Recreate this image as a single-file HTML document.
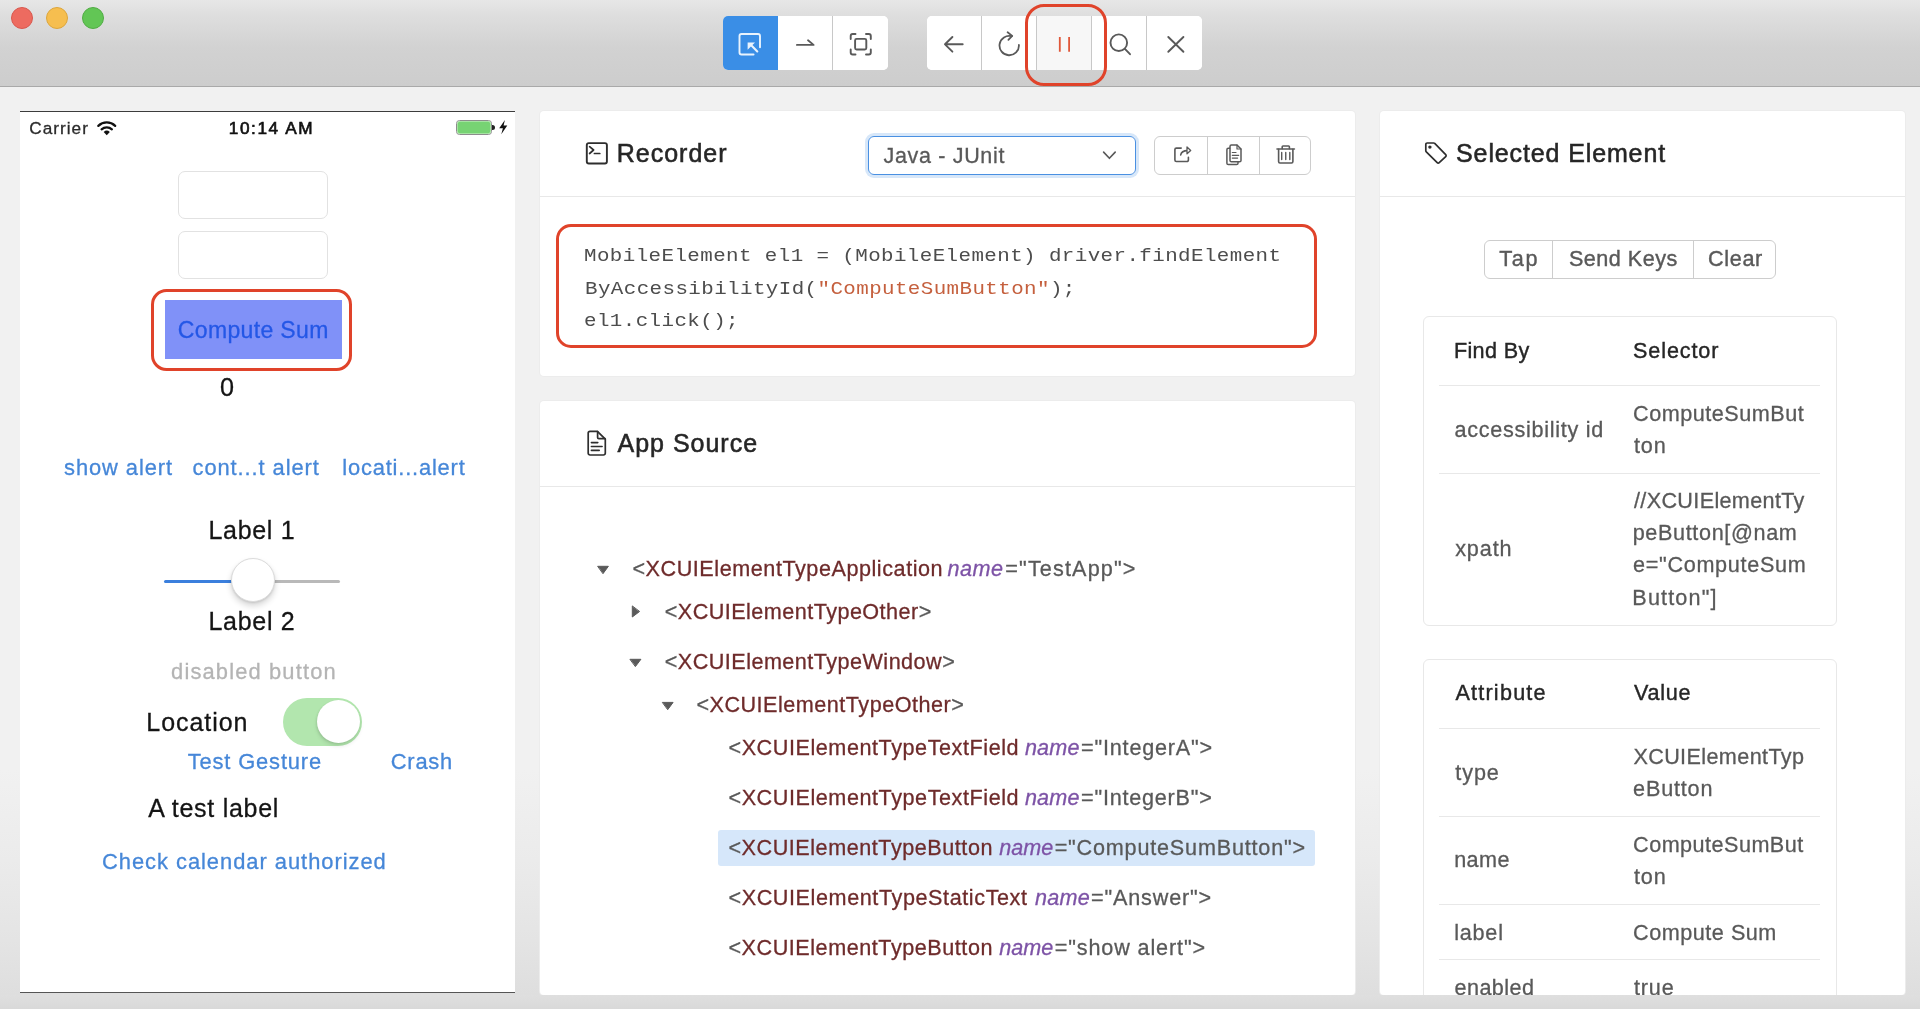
<!DOCTYPE html>
<html>
<head>
<meta charset="utf-8">
<title>Appium</title>
<style>
*{box-sizing:border-box;margin:0;padding:0}
html,body{width:1920px;height:1009px;overflow:hidden}
body{background:linear-gradient(to bottom,#f1f1f1 0,#f1f1f1 770px,#ebebeb 860px,#e4e4e4 940px,#dedede 995px,#dadada 1009px);font-family:"Liberation Sans",sans-serif;color:#262626;position:relative}
.abs{position:absolute}
svg{position:absolute;overflow:visible}
.t{position:absolute;white-space:pre;line-height:normal;font-family:"Liberation Sans",sans-serif}
#titlebar{position:absolute;left:0;top:0;width:1920px;height:87px;background:linear-gradient(#e7e7e7 0,#dedede 18%,#d2d2d2 55%,#cdcdcd 100%);border-bottom:1px solid #a9a9a9}
.tl{position:absolute;top:7px;width:22px;height:22px;border-radius:50%}
.bgroup{position:absolute;top:16px;height:54px;display:flex;border-radius:5px;background:#fff;overflow:hidden}
.bgroup .b{width:55px;height:54px;border-right:1px solid #c8c8c8;position:relative;background:#fff}
.bgroup .b:last-child{border-right:none}
.card{position:absolute;background:#fff;border-radius:4px;overflow:hidden;box-shadow:0 0 0 1px #ececec}
.hline{position:absolute;height:1px;background:#e8e8e8}
.sbtn{position:absolute;display:flex;border:1px solid #cdcdcd;border-radius:6px;background:#fff}
.sbtn div{border-right:1px solid #cdcdcd;height:100%}
.sbtn div:last-child{border-right:none}
.tbl{position:absolute;border:1px solid #e8e8e8;border-radius:6px;background:#fff}
#bottomshade{position:absolute;left:0;top:995px;width:1920px;height:14px;background:linear-gradient(#dfdfdf,#d9d9d9)}
body.measure{background:#fff}
body.measure *{visibility:hidden}
body.measure .t,body.measure .t *{visibility:visible;color:#000 !important;-webkit-text-stroke-color:#000 !important}
</style>
</head>
<body>
<div id="titlebar">
  <div class="tl" style="left:10.5px;background:#ed6b60;border:1px solid #d9584e"></div>
  <div class="tl" style="left:46.3px;background:#f6be4f;border:1px solid #dda63c"></div>
  <div class="tl" style="left:82px;background:#62c655;border:1px solid #51ad44"></div>
  <div class="bgroup" id="g1" style="left:723px;width:165px">
    <div class="b" style="background:#3a8ee6;border-right-color:#3a8ee6"></div>
    <div class="b"></div>
    <div class="b"></div>
  </div>
  <div class="bgroup" id="g2" style="left:927px;width:275px">
    <div class="b"></div>
    <div class="b"></div>
    <div class="b" style="background:#f7f7f7"></div>
    <div class="b"></div>
    <div class="b"></div>
  </div>
  <svg style="left:0;top:0" width="1920" height="87" viewBox="0 0 1920 87" fill="none" stroke-linecap="round" stroke-linejoin="round">
  <!-- select element (white on blue) -->
  <g stroke="#e9f3fd" stroke-width="1.9">
    <path d="M753.6 54.5 H741.5 a2 2 0 0 1 -2 -2 V36 a2 2 0 0 1 2 -2 H758 a2 2 0 0 1 2 2 V47.2"/>
    <path d="M757.3 51.4 L750 44.1" stroke-width="2.1"/>
  </g>
  <path d="M747.6 42.4 H755 L747.6 49.8 Z" fill="#e9f3fd" stroke="none"/>
  <!-- swap right -->
  <g stroke="#595959" stroke-width="1.8">
    <path d="M796.9 44.9 H813.6 L808 40.3"/>
  </g>
  <!-- scan -->
  <g stroke="#595959" stroke-width="1.9">
    <path d="M850.7 39 V36 a2 2 0 0 1 2 -2 H855.5"/>
    <path d="M866 34 H868.8 a2 2 0 0 1 2 2 V39"/>
    <path d="M870.8 49.5 V52.5 a2 2 0 0 1 -2 2 H866"/>
    <path d="M855.5 54.5 H852.7 a2 2 0 0 1 -2 -2 V49.5"/>
    <rect x="855.1" y="38.9" width="11.2" height="10.6" rx="1.5"/>
  </g>
  <!-- arrow left -->
  <g stroke="#595959" stroke-width="1.9">
    <path d="M962.7 44.3 H945 M952.4 37 L945 44.3 L952.4 51.7"/>
  </g>
  <!-- reload -->
  <g stroke="#595959" stroke-width="1.8">
    <path d="M1018.9 45 A9.7 9.7 0 1 1 1011.8 36.2"/>
    <path d="M1007.6 32.3 L1012.2 35.9 L1008.4 39.8"/>
  </g>
  <!-- pause -->
  <g stroke="#e0583a" stroke-width="1.8" stroke-linecap="butt">
    <path d="M1059.8 36.9 V51.8 M1069.1 36.9 V51.8"/>
  </g>
  <!-- search -->
  <g stroke="#595959" stroke-width="1.9">
    <circle cx="1118.8" cy="42.7" r="8.3"/>
    <path d="M1124.9 48.9 L1130 54.2"/>
  </g>
  <!-- close -->
  <g stroke="#595959" stroke-width="1.9">
    <path d="M1168.3 37 L1183.4 51.8 M1183.4 37 L1168.3 51.8"/>
  </g>
</svg>

  <div class="abs" style="left:1025.4px;top:4.3px;width:81.7px;height:82px;border:3.7px solid #e0432a;border-radius:19px"></div>
</div>

<!-- phone -->
<div id="phone" class="abs" style="left:20px;top:111px;width:495px;height:882px;background:#fff;border-top:1px solid #3c3c3c;border-bottom:1px solid #555"></div>
<!-- status bar icons -->
<svg style="left:94px;top:116.7px" width="26" height="22" viewBox="94 116 26 22">
  <g fill="none" stroke="#111" stroke-width="2.25" stroke-linecap="round">
    <path d="M98.3 124.9 A12.2 12.2 0 0 1 115.2 124.9"/>
    <path d="M101.6 128.3 A7.6 7.6 0 0 1 111.9 128.3"/>
  </g>
  <path d="M106.75 134.2 L103.7 131 A4.4 4.4 0 0 1 109.8 131 Z" fill="#111"/>
</svg>
<div class="abs" style="left:456px;top:120px;width:36px;height:15px;border:1px solid #8d8d8d;border-radius:3.5px;background:#fff"></div>
<div class="abs" style="left:457px;top:121px;width:34px;height:13px;border-radius:2.5px;background:#77d373;border:1px solid #a5e3a2"></div>
<div class="abs" style="left:492px;top:125px;width:2.6px;height:5.4px;background:#222;border-radius:0 2.5px 2.5px 0"></div>
<svg style="left:498px;top:119px" width="11" height="16" viewBox="498 119 11 16"><path d="M504.9 119.9 L499.2 128.3 L502.9 128.3 L501.3 134.2 L507.3 125.6 L503.6 125.6 Z" fill="#111"/></svg>
<!-- text fields -->
<div class="abs" style="left:177.7px;top:170.7px;width:150px;height:48.3px;border:1px solid #e2e2e2;border-radius:7px;background:#fff"></div>
<div class="abs" style="left:177.7px;top:231.2px;width:150px;height:48.3px;border:1px solid #e2e2e2;border-radius:7px;background:#fff"></div>
<!-- compute sum -->
<div class="abs" style="left:165px;top:300px;width:177px;height:59px;background:#8091f8"></div>
<div class="abs" style="left:151.2px;top:288.9px;width:201.3px;height:82.2px;border:3.3px solid #e0432a;border-radius:15.5px"></div>
<!-- slider -->
<div class="abs" style="left:164px;top:579.5px;width:90px;height:3px;background:#3b7fdd;border-radius:1.5px"></div>
<div class="abs" style="left:254px;top:579.5px;width:86px;height:3px;background:#b9b9b9;border-radius:1.5px"></div>
<div class="abs" style="left:230.5px;top:557.5px;width:44px;height:44px;border-radius:50%;background:#fff;border:0.5px solid #dcdcdc;box-shadow:0 4px 6px rgba(0,0,0,0.16),0 1px 2px rgba(0,0,0,0.10)"></div>
<!-- switch -->
<div class="abs" style="left:283.1px;top:697.5px;width:78.9px;height:48.2px;border-radius:24.1px;background:#b2e6ae"></div>
<div class="abs" style="left:317px;top:700px;width:43.3px;height:43.3px;border-radius:50%;background:#fff;box-shadow:0 3px 4px rgba(0,0,0,0.10),-1px 1px 2px rgba(0,0,0,0.07)"></div>


<!-- recorder card -->
<div class="card" id="rec" style="left:539.8px;top:110.8px;width:815px;height:265px">
  <div class="hline" style="left:0;top:84.8px;width:815px"></div>
</div>
<!-- select box -->
<div class="abs" style="left:868px;top:136px;width:268px;height:39px;border:1.5px solid #4a90e2;border-radius:6px;box-shadow:0 0 0 3px rgba(74,144,226,0.22)"></div>
<!-- button group -->
<div class="sbtn" style="left:1154.4px;top:136.2px;width:157px;height:38.6px"><div style="width:52.6px"></div><div style="width:52.1px"></div><div style="flex:1"></div></div>
<!-- code box -->
<div class="abs" style="left:555.8px;top:224.4px;width:761px;height:124px;border:3.3px solid #e0432a;border-radius:15px"></div>

<svg style="left:540px;top:111px" width="815" height="265" viewBox="540 111 815 265" fill="none" stroke-linecap="round" stroke-linejoin="round">
  <!-- recorder (code) icon -->
  <g stroke="#2e2e2e" stroke-width="1.9">
    <rect x="586.8" y="143.1" width="20.1" height="20.4" rx="2"/>
    <path d="M589.6 146.7 L593.6 150 L589.6 153.5 M594.4 153.5 H599.8" stroke-width="1.7"/>
  </g>
  <!-- select chevron -->
  <path d="M1103.6 152.1 L1109.4 158.3 L1115.2 152.1" stroke="#595959" stroke-width="1.6"/>
  <!-- export -->
  <g stroke="#595959" stroke-width="1.6">
    <path d="M1181.2 148.1 H1176.4 a1.5 1.5 0 0 0 -1.5 1.5 V160 a1.5 1.5 0 0 0 1.5 1.5 H1186.9 a1.5 1.5 0 0 0 1.5 -1.5 V157.2"/>
    <path d="M1180.7 154.9 C1181.3 151.9 1183.6 150.6 1187.4 150.6"/>
    <path d="M1187 147 L1190.7 150.5 L1187 153.8 Z" fill="#fff" stroke-width="1.3"/>
  </g>
  <!-- copy -->
  <g stroke="#595959" stroke-width="1.5">
    <path d="M1230 146.4 a1.4 1.4 0 0 1 1.4 -1.4 H1237 L1241 149 V160.4 a1.4 1.4 0 0 1 -1.4 1.4 H1231.4 a1.4 1.4 0 0 1 -1.4 -1.4 Z" fill="#fff"/>
    <path d="M1237 145 V149 H1241" stroke-width="1.2"/>
    <path d="M1229.6 148.3 H1228.3 a1.4 1.4 0 0 0 -1.4 1.4 V163.2 a1.4 1.4 0 0 0 1.4 1.4 H1236.6 a1.4 1.4 0 0 0 1.4 -1.4 V162.3"/>
    <path d="M1232.3 152.5 H1236 M1232.3 155.3 H1238.7 M1232.3 158.1 H1237.6" stroke-width="1.2"/>
  </g>
  <!-- delete -->
  <g stroke="#595959" stroke-width="1.6">
    <path d="M1277 149 H1294.4"/>
    <path d="M1282.2 148.6 V146.8 a0.8 0.8 0 0 1 .8 -.8 H1288.6 a0.8 0.8 0 0 1 .8 .8 V148.6"/>
    <path d="M1278.6 149.4 V161.6 a1.4 1.4 0 0 0 1.4 1.4 H1291.5 a1.4 1.4 0 0 0 1.4 -1.4 V149.4"/>
    <path d="M1281.7 152.4 V159.5 M1285.75 152.4 V159.5 M1289.8 152.4 V159.5" stroke-width="1.4"/>
  </g>
</svg>


<!-- app source card -->
<div class="card" id="src" style="left:539.8px;top:400.6px;width:815px;height:594.4px">
  <div class="hline" style="left:0;top:85.4px;width:815px"></div>
</div>
<svg style="left:540px;top:401px" width="815" height="594" viewBox="540 401 815 594" fill="none" stroke-linecap="round" stroke-linejoin="round">
  <!-- file-text icon -->
  <g stroke="#2e2e2e" stroke-width="1.7">
    <path d="M597.4 431.3 H590 a1.8 1.8 0 0 0 -1.8 1.8 V453.2 a1.8 1.8 0 0 0 1.8 1.8 H603.5 a1.8 1.8 0 0 0 1.8 -1.8 V439.2 Z"/>
    <path d="M597.6 431.6 V437.4 a1.3 1.3 0 0 0 1.3 1.3 H605"/>
    <path d="M591.4 442.6 H597.8 M591.4 446.5 H602.1 M591.4 450.4 H599.2" stroke-width="1.6"/>
  </g>
  <!-- tree arrows -->
  <g fill="#5a5a5a" stroke="#5a5a5a" stroke-width="1">
    <path d="M598 566.3 H608.4 L603.2 573.4 Z"/>
    <path d="M632.3 606.3 V617 L639.3 611.7 Z"/>
    <path d="M630.3 659.3 H640.9 L635.6 666.3 Z"/>
    <path d="M662.7 702.4 H673.1 L667.9 709.4 Z"/>
  </g>
</svg>
<div class="abs" style="left:717.7px;top:830.3px;width:597px;height:35.3px;background:#d6e7fa;border-radius:3px"></div>


<!-- selected element card -->
<div class="card" id="sel" style="left:1379.6px;top:110.8px;width:525.8px;height:884.2px">
  <div class="hline" style="left:0;top:84.8px;width:527px"></div>
</div>
<svg style="left:1379px;top:111px" width="527" height="100" viewBox="1379 111 527 100" fill="none" stroke-linecap="round" stroke-linejoin="round">
  <g stroke="#2e2e2e" stroke-width="1.7">
    <path d="M1427.2 143 H1433.6 a1.6 1.6 0 0 1 1.1 .45 L1445.7 154.6 a1.4 1.4 0 0 1 0 2 L1439.2 162.7 a1.4 1.4 0 0 1 -2 0 L1426.3 151.8 a1.6 1.6 0 0 1 -.5 -1.1 V144.4 a1.4 1.4 0 0 1 1.4 -1.4 Z"/>
  </g>
  <circle cx="1429.9" cy="147.1" r="1.7" fill="#2e2e2e"/>
</svg>
<div class="sbtn" style="left:1484px;top:240.3px;width:291.8px;height:38.8px"><div style="width:68.4px"></div><div style="width:140.5px"></div><div style="flex:1"></div></div>
<!-- table 1 -->
<div class="tbl" style="left:1423.4px;top:315.6px;width:414px;height:310px"></div>
<div class="hline" style="left:1439px;top:385.2px;width:381.2px"></div>
<div class="hline" style="left:1439px;top:472.7px;width:381.2px"></div>
<!-- table 2 -->
<div class="tbl" style="left:1423.4px;top:658.8px;width:414px;height:360px"></div>
<div class="hline" style="left:1439px;top:728.4px;width:381.2px"></div>
<div class="hline" style="left:1439px;top:816.2px;width:381.2px"></div>
<div class="hline" style="left:1439px;top:903.6px;width:381.2px"></div>
<div class="hline" style="left:1439px;top:959.1px;width:381.2px"></div>


<div id="textlayer" style="position:absolute;left:0;top:0;width:1920px;height:1009px;will-change:transform">
<span class="t" id="carrier" style="left:29.34px;top:118.00px;font-size:17.2px;color:#2a2a2a;letter-spacing:1.001px;-webkit-text-stroke:0.3px;">Carrier</span>
<span class="t" id="time" style="left:228.81px;top:118.00px;font-size:17.2px;color:#111;letter-spacing:1.586px;-webkit-text-stroke:0.65px;">10:14 AM</span>
<span class="t" id="csum" style="left:177.76px;top:316.71px;font-size:23px;color:#2457e6;letter-spacing:0.363px;-webkit-text-stroke:0.3px;">Compute Sum</span>
<span class="t" id="zero" style="left:220.11px;top:373.00px;font-size:25.2px;color:#141414;-webkit-text-stroke:0.3px;">0</span>
<span class="t" id="salert" style="left:64.07px;top:455.00px;font-size:21.9px;color:#4687d8;letter-spacing:0.921px;-webkit-text-stroke:0.3px;">show alert</span>
<span class="t" id="calert" style="left:192.53px;top:455.00px;font-size:21.9px;color:#4687d8;letter-spacing:0.916px;-webkit-text-stroke:0.3px;">cont...t alert</span>
<span class="t" id="lalert" style="left:342.35px;top:455.00px;font-size:21.9px;color:#4687d8;letter-spacing:0.805px;-webkit-text-stroke:0.3px;">locati...alert</span>
<span class="t" id="label1" style="left:208.50px;top:515.60px;font-size:25px;color:#141414;letter-spacing:0.689px;-webkit-text-stroke:0.3px;">Label 1</span>
<span class="t" id="label2" style="left:208.50px;top:606.91px;font-size:25px;color:#141414;letter-spacing:0.701px;-webkit-text-stroke:0.3px;">Label 2</span>
<span class="t" id="disabled" style="left:171.09px;top:659.00px;font-size:21.9px;color:#b4b4b4;letter-spacing:1.149px;-webkit-text-stroke:0.3px;">disabled button</span>
<span class="t" id="location" style="left:146.33px;top:707.61px;font-size:25px;color:#141414;letter-spacing:0.940px;-webkit-text-stroke:0.3px;">Location</span>
<span class="t" id="tgest" style="left:187.63px;top:749.11px;font-size:21.9px;color:#4687d8;letter-spacing:0.861px;-webkit-text-stroke:0.3px;">Test Gesture</span>
<span class="t" id="crash" style="left:390.82px;top:749.11px;font-size:21.9px;color:#4687d8;letter-spacing:0.740px;-webkit-text-stroke:0.3px;">Crash</span>
<span class="t" id="atest" style="left:148.16px;top:793.70px;font-size:25px;color:#141414;letter-spacing:0.718px;-webkit-text-stroke:0.3px;">A test label</span>
<span class="t" id="ccal" style="left:101.99px;top:848.50px;font-size:21.9px;color:#4687d8;letter-spacing:0.975px;-webkit-text-stroke:0.3px;">Check calendar authorized</span>
<span class="t" id="rec" style="left:616.70px;top:139.40px;font-size:25px;color:#262626;letter-spacing:1.012px;-webkit-text-stroke:0.55px;">Recorder</span>
<span class="t" id="java" style="left:883.48px;top:143.91px;font-size:21.5px;color:#595959;letter-spacing:0.676px;-webkit-text-stroke:0.3px;">Java - JUnit</span>
<span class="t" id="code1" style="left:584.03px;top:246.31px;font-size:18.6px;color:#4d4d4d;letter-spacing:0.373px;font-family:'Liberation Mono',monospace;transform:scaleX(1.12);transform-origin:0 0;">MobileElement el1 = (MobileElement) driver.findElement</span>
<span class="t" id="code2" style="left:584.51px;top:278.61px;font-size:18.6px;color:#4d4d4d;letter-spacing:0.373px;font-family:'Liberation Mono',monospace;transform:scaleX(1.12);transform-origin:0 0;">ByAccessibilityId(<span style="color:#c5603e">"ComputeSumButton"</span>);</span>
<span class="t" id="code3" style="left:584.11px;top:310.91px;font-size:18.6px;color:#4d4d4d;letter-spacing:0.373px;font-family:'Liberation Mono',monospace;transform:scaleX(1.12);transform-origin:0 0;">el1.click();</span>
<span class="t" id="appsrc" style="left:617.57px;top:429.31px;font-size:25px;color:#262626;letter-spacing:0.981px;-webkit-text-stroke:0.55px;">App Source</span>
<span class="t" id="t1a" style="left:632.40px;top:556.00px;font-size:21.6px;color:#595959;letter-spacing:0.551px;-webkit-text-stroke:0.3px;">&lt;<span style="color:#6e2b2b">XCUIElementTypeApplication</span></span>
<span class="t" id="t1b" style="left:947.57px;top:556.00px;font-size:21.6px;color:#7d53a6;letter-spacing:0.515px;font-style:italic;-webkit-text-stroke:0.3px;">name</span>
<span class="t" id="t1c" style="left:1005.33px;top:556.00px;font-size:21.6px;color:#595959;letter-spacing:1.150px;-webkit-text-stroke:0.3px;">="TestApp"&gt;</span>
<span class="t" id="t2a" style="left:664.69px;top:599.00px;font-size:21.6px;color:#595959;letter-spacing:0.465px;-webkit-text-stroke:0.3px;">&lt;<span style="color:#6e2b2b">XCUIElementTypeOther</span>&gt;</span>
<span class="t" id="t3a" style="left:664.69px;top:649.00px;font-size:21.6px;color:#595959;letter-spacing:0.474px;-webkit-text-stroke:0.3px;">&lt;<span style="color:#6e2b2b">XCUIElementTypeWindow</span>&gt;</span>
<span class="t" id="t4a" style="left:696.38px;top:691.51px;font-size:21.6px;color:#595959;letter-spacing:0.502px;-webkit-text-stroke:0.3px;">&lt;<span style="color:#6e2b2b">XCUIElementTypeOther</span>&gt;</span>
<span class="t" id="t5a" style="left:728.44px;top:735.00px;font-size:21.6px;color:#595959;letter-spacing:0.562px;-webkit-text-stroke:0.3px;">&lt;<span style="color:#6e2b2b">XCUIElementTypeTextField</span></span>
<span class="t" id="t5b" style="left:1024.92px;top:735.00px;font-size:21.6px;color:#7d53a6;letter-spacing:0.157px;font-style:italic;-webkit-text-stroke:0.3px;">name</span>
<span class="t" id="t5c" style="left:1081.10px;top:735.00px;font-size:21.6px;color:#595959;letter-spacing:0.800px;-webkit-text-stroke:0.3px;">="IntegerA"&gt;</span>
<span class="t" id="t6a" style="left:728.44px;top:784.71px;font-size:21.6px;color:#595959;letter-spacing:0.562px;-webkit-text-stroke:0.3px;">&lt;<span style="color:#6e2b2b">XCUIElementTypeTextField</span></span>
<span class="t" id="t6b" style="left:1024.92px;top:784.71px;font-size:21.6px;color:#7d53a6;letter-spacing:0.157px;font-style:italic;-webkit-text-stroke:0.3px;">name</span>
<span class="t" id="t6c" style="left:1081.10px;top:784.71px;font-size:21.6px;color:#595959;letter-spacing:0.775px;-webkit-text-stroke:0.3px;">="IntegerB"&gt;</span>
<span class="t" id="t7a" style="left:728.44px;top:835.21px;font-size:21.6px;color:#595959;letter-spacing:0.540px;-webkit-text-stroke:0.3px;">&lt;<span style="color:#6e2b2b">XCUIElementTypeButton</span></span>
<span class="t" id="t7b" style="left:999.35px;top:835.21px;font-size:21.6px;color:#7d53a6;letter-spacing:-0.029px;font-style:italic;-webkit-text-stroke:0.3px;">name</span>
<span class="t" id="t7c" style="left:1054.71px;top:835.21px;font-size:21.6px;color:#595959;letter-spacing:0.807px;-webkit-text-stroke:0.3px;">="ComputeSumButton"&gt;</span>
<span class="t" id="t8a" style="left:728.44px;top:885.10px;font-size:21.6px;color:#595959;letter-spacing:0.589px;-webkit-text-stroke:0.3px;">&lt;<span style="color:#6e2b2b">XCUIElementTypeStaticText</span></span>
<span class="t" id="t8b" style="left:1034.92px;top:885.10px;font-size:21.6px;color:#7d53a6;letter-spacing:0.296px;font-style:italic;-webkit-text-stroke:0.3px;">name</span>
<span class="t" id="t8c" style="left:1091.10px;top:885.10px;font-size:21.6px;color:#595959;letter-spacing:0.830px;-webkit-text-stroke:0.3px;">="Answer"&gt;</span>
<span class="t" id="t9a" style="left:728.44px;top:935.10px;font-size:21.6px;color:#595959;letter-spacing:0.540px;-webkit-text-stroke:0.3px;">&lt;<span style="color:#6e2b2b">XCUIElementTypeButton</span></span>
<span class="t" id="t9b" style="left:999.35px;top:935.10px;font-size:21.6px;color:#7d53a6;letter-spacing:-0.029px;font-style:italic;-webkit-text-stroke:0.3px;">name</span>
<span class="t" id="t9c" style="left:1054.71px;top:935.10px;font-size:21.6px;color:#595959;letter-spacing:0.876px;-webkit-text-stroke:0.3px;">="show alert"&gt;</span>
<span class="t" id="selel" style="left:1456.06px;top:139.40px;font-size:25px;color:#262626;letter-spacing:0.875px;-webkit-text-stroke:0.55px;">Selected Element</span>
<span class="t" id="tap" style="left:1499.16px;top:246.31px;font-size:21.6px;color:#595959;letter-spacing:1.722px;-webkit-text-stroke:0.4px;">Tap</span>
<span class="t" id="sendkeys" style="left:1568.90px;top:246.31px;font-size:21.6px;color:#595959;letter-spacing:0.486px;-webkit-text-stroke:0.4px;">Send Keys</span>
<span class="t" id="clear" style="left:1708.11px;top:246.31px;font-size:21.6px;color:#595959;letter-spacing:0.650px;-webkit-text-stroke:0.4px;">Clear</span>
<span class="t" id="findby" style="left:1453.88px;top:337.81px;font-size:21.6px;color:#262626;letter-spacing:0.349px;-webkit-text-stroke:0.4px;">Find By</span>
<span class="t" id="selector" style="left:1633.05px;top:337.81px;font-size:21.6px;color:#262626;letter-spacing:0.877px;-webkit-text-stroke:0.4px;">Selector</span>
<span class="t" id="accid" style="left:1454.51px;top:416.81px;font-size:21.6px;color:#595959;letter-spacing:0.709px;-webkit-text-stroke:0.3px;">accessibility id</span>
<span class="t" id="csb1" style="left:1633.10px;top:400.70px;font-size:21.6px;color:#595959;letter-spacing:0.521px;-webkit-text-stroke:0.3px;">ComputeSumBut</span>
<span class="t" id="ton1" style="left:1633.88px;top:432.81px;font-size:21.6px;color:#595959;letter-spacing:0.900px;-webkit-text-stroke:0.3px;">ton</span>
<span class="t" id="xpath" style="left:1455.16px;top:536.31px;font-size:21.6px;color:#595959;letter-spacing:0.900px;-webkit-text-stroke:0.3px;">xpath</span>
<span class="t" id="xp1" style="left:1633.99px;top:488.11px;font-size:21.6px;color:#595959;letter-spacing:0.343px;-webkit-text-stroke:0.3px;">//XCUIElementTy</span>
<span class="t" id="xp2" style="left:1632.73px;top:520.20px;font-size:21.6px;color:#595959;letter-spacing:0.643px;-webkit-text-stroke:0.3px;">peButton[@nam</span>
<span class="t" id="xp3" style="left:1633.07px;top:552.31px;font-size:21.6px;color:#595959;letter-spacing:0.696px;-webkit-text-stroke:0.3px;">e="ComputeSum</span>
<span class="t" id="xp4" style="left:1632.37px;top:584.70px;font-size:21.6px;color:#595959;letter-spacing:1.148px;-webkit-text-stroke:0.3px;">Button"]</span>
<span class="t" id="attr" style="left:1455.38px;top:680.31px;font-size:21.6px;color:#262626;letter-spacing:1.226px;-webkit-text-stroke:0.4px;">Attribute</span>
<span class="t" id="value" style="left:1633.93px;top:680.31px;font-size:21.6px;color:#262626;letter-spacing:0.767px;-webkit-text-stroke:0.4px;">Value</span>
<span class="t" id="type" style="left:1455.32px;top:759.50px;font-size:21.6px;color:#595959;letter-spacing:0.900px;-webkit-text-stroke:0.3px;">type</span>
<span class="t" id="ty1" style="left:1633.38px;top:744.11px;font-size:21.6px;color:#595959;letter-spacing:0.384px;-webkit-text-stroke:0.3px;">XCUIElementTyp</span>
<span class="t" id="ty2" style="left:1633.07px;top:775.91px;font-size:21.6px;color:#595959;letter-spacing:0.826px;-webkit-text-stroke:0.3px;">eButton</span>
<span class="t" id="name" style="left:1454.15px;top:847.20px;font-size:21.6px;color:#595959;letter-spacing:0.432px;-webkit-text-stroke:0.3px;">name</span>
<span class="t" id="nm1" style="left:1633.10px;top:831.91px;font-size:21.6px;color:#595959;letter-spacing:0.474px;-webkit-text-stroke:0.3px;">ComputeSumBut</span>
<span class="t" id="nm2" style="left:1633.88px;top:863.70px;font-size:21.6px;color:#595959;letter-spacing:0.900px;-webkit-text-stroke:0.3px;">ton</span>
<span class="t" id="label" style="left:1454.14px;top:919.50px;font-size:21.6px;color:#595959;letter-spacing:0.807px;-webkit-text-stroke:0.3px;">label</span>
<span class="t" id="lbv" style="left:1633.10px;top:919.50px;font-size:21.6px;color:#595959;letter-spacing:0.525px;-webkit-text-stroke:0.3px;">Compute Sum</span>
<span class="t" id="enabled" style="left:1454.53px;top:974.50px;font-size:21.6px;color:#595959;letter-spacing:0.438px;-webkit-text-stroke:0.3px;clip-path:inset(0 0 0.00px 0);">enabled</span>
<span class="t" id="true" style="left:1633.88px;top:974.50px;font-size:21.6px;color:#595959;letter-spacing:0.900px;-webkit-text-stroke:0.3px;clip-path:inset(0 0 0.00px 0);">true</span>
</div>
<div id="bottomshade"></div>
</body>
</html>
